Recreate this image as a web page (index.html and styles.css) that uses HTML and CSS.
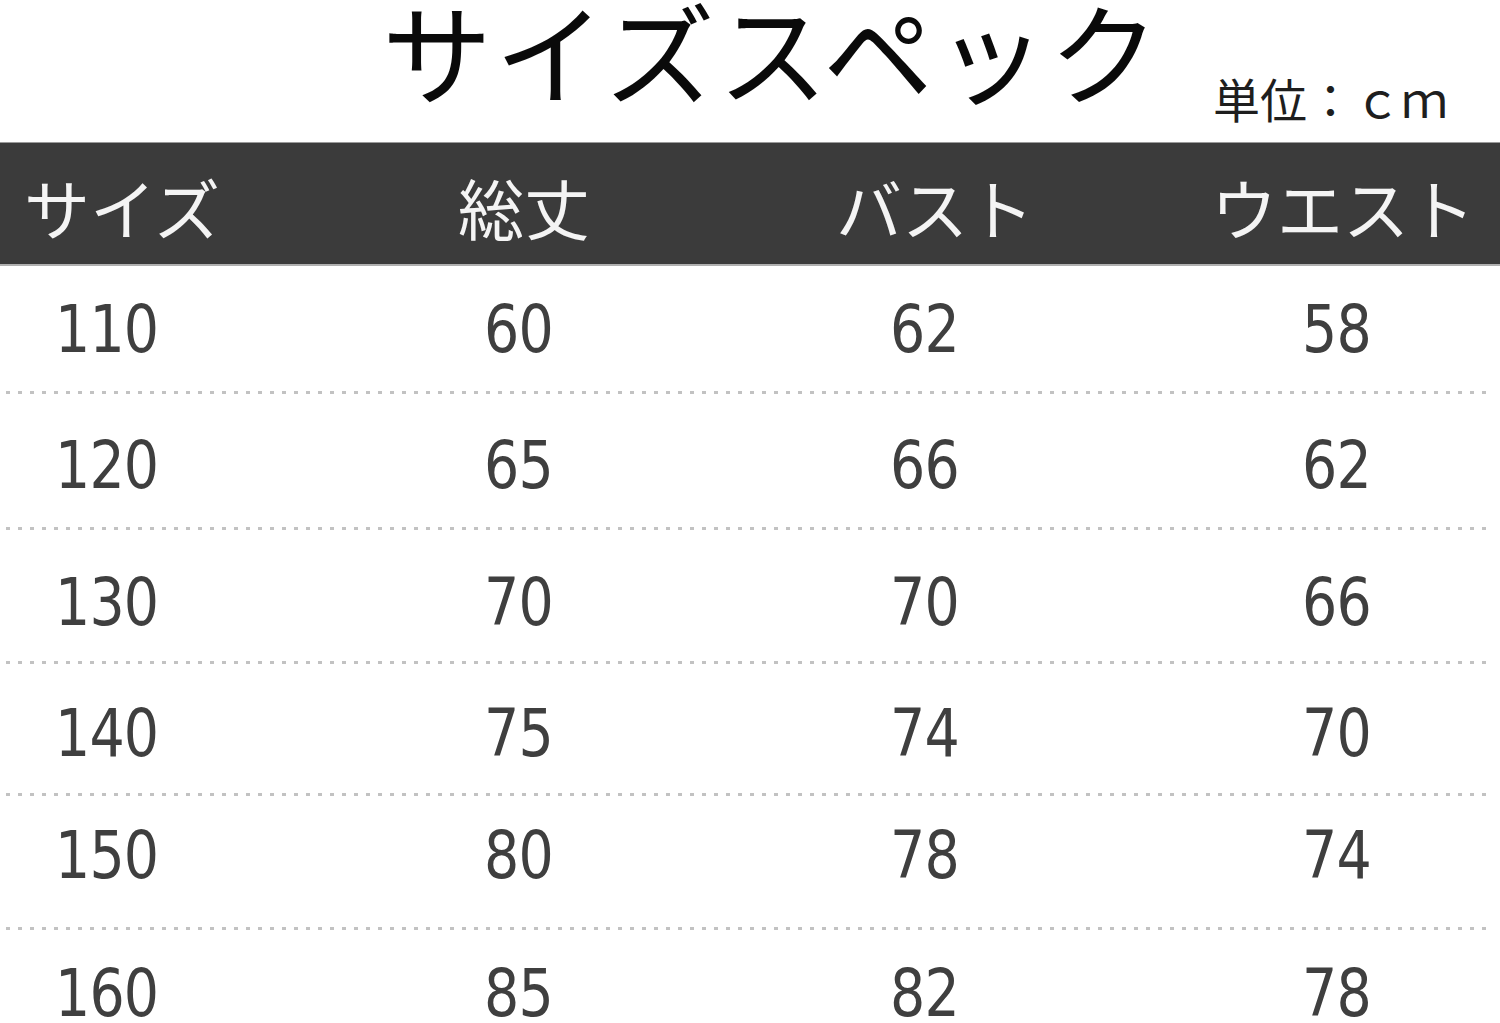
FILE: index.html
```html
<!DOCTYPE html>
<html lang="ja">
<head>
<meta charset="utf-8">
<title>サイズスペック</title>
<link rel="stylesheet" href="styles.css">
</head>
<body>
<div class="page">
  <div class="top">
    <h1 class="title">サイズスペック</h1>
    <div class="unit">単位：ｃｍ</div>
  </div>
  <div class="head">
    <div class="hc c1">サイズ</div>
    <div class="hc c2">総丈</div>
    <div class="hc c3">バスト</div>
    <div class="hc c4">ウエスト</div>
  </div>
  <div class="rows">
    <div class="row r1"><div class="cell c1"><span class="n">110</span></div><div class="cell c2"><span class="n">60</span></div><div class="cell c3"><span class="n">62</span></div><div class="cell c4"><span class="n">58</span></div></div>
    <div class="sep"></div>
    <div class="row r2"><div class="cell c1"><span class="n">120</span></div><div class="cell c2"><span class="n">65</span></div><div class="cell c3"><span class="n">66</span></div><div class="cell c4"><span class="n">62</span></div></div>
    <div class="sep"></div>
    <div class="row r3"><div class="cell c1"><span class="n">130</span></div><div class="cell c2"><span class="n">70</span></div><div class="cell c3"><span class="n">70</span></div><div class="cell c4"><span class="n">66</span></div></div>
    <div class="sep"></div>
    <div class="row r4"><div class="cell c1"><span class="n">140</span></div><div class="cell c2"><span class="n">75</span></div><div class="cell c3"><span class="n">74</span></div><div class="cell c4"><span class="n">70</span></div></div>
    <div class="sep"></div>
    <div class="row r5"><div class="cell c1"><span class="n">150</span></div><div class="cell c2"><span class="n">80</span></div><div class="cell c3"><span class="n">78</span></div><div class="cell c4"><span class="n">74</span></div></div>
    <div class="sep"></div>
    <div class="row r6"><div class="cell c1"><span class="n">160</span></div><div class="cell c2"><span class="n">85</span></div><div class="cell c3"><span class="n">82</span></div><div class="cell c4"><span class="n">78</span></div></div>
  </div>
</div>
</body>
</html>
```
FILE: styles.css
```css
html, body {
  margin: 0;
  padding: 0;
  background: #ffffff;
}
.page {
  width: 1500px;
  height: 1023px;
  overflow: hidden;
  font-family: "Noto Sans CJK JP", "Noto Sans", sans-serif;
}
.top {
  height: 142px;
  display: flex;
  align-items: flex-start;
}
.title {
  margin: 0;
  padding-left: 382px;
  padding-top: 0;
  font-size: 110px;
  line-height: 98px;
  font-weight: 400;
  color: #0a0a0a;
  letter-spacing: 3px;
  white-space: nowrap;
}
.unit {
  margin-left: 51px;
  margin-top: 70px;
  font-size: 47px;
  line-height: 56px;
  color: #1e1e1e;
  white-space: nowrap;
}
.head {
  height: 117px;
  background: #3b3b3b;
  border-top: 1px solid #9a9a9a;
  border-bottom: 2px solid #b0b0b0;
  display: grid;
  grid-template-columns: 430px 400px 375px 1fr;
  align-items: center;
  padding-top: 4px;
}
.hc {
  color: #f4f4f4;
  font-size: 66px;
  line-height: 1;
  white-space: nowrap;
}
.hc.c1 { padding-left: 24px; }
.hc.c2 { padding-left: 28px; }
.hc.c3 { padding-left: 6px; }
.hc.c4 { padding-left: 6px; }
.rows {
  display: flex;
  flex-direction: column;
}
.row {
  height: 132px;
  box-sizing: border-box;
  display: grid;
  grid-template-columns: 430px 400px 375px 1fr;
  align-items: center;
}
.row.r1 { height: 125px; padding-top: 2px; }
.row.r2 { height: 133px; padding-top: 10px; }
.row.r3 { height: 131px; padding-top: 14px; }
.row.r4 { height: 129px; padding-top: 10px; }
.row.r5 { height: 131px; padding-bottom: 12px; }
.row.r6 { padding-bottom: 4px; }
.cell.c1 { padding-left: 55px; }
.cell.c2 { padding-left: 54px; }
.cell.c3 { padding-left: 60px; }
.cell.c4 { padding-left: 97px; }
.n {
  display: inline-block;
  font-family: "DejaVu Sans", "Noto Sans", sans-serif;
  font-size: 66px;
  line-height: 1;
  color: #3f3f3f;
  letter-spacing: -1px;
  white-space: nowrap;
  transform: scaleX(0.84);
  transform-origin: left center;
}
.sep {
  height: 3px;
  margin: 0 10px 0 6px;
  background-image: repeating-linear-gradient(to right, #c2c2c2 0 4px, transparent 4px 12px);
}
```
